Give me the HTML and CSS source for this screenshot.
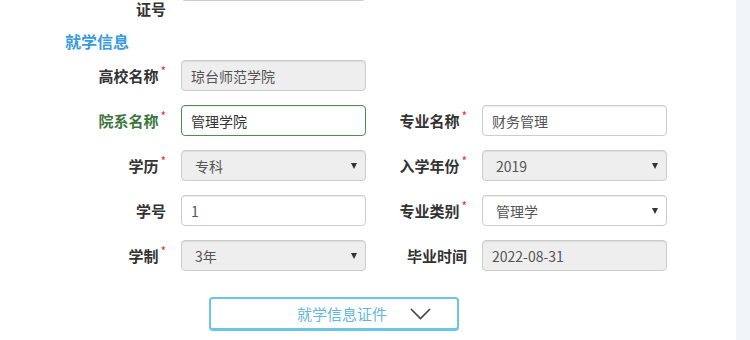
FILE: index.html
```html
<!DOCTYPE html>
<html lang="zh-CN">
<head>
    <meta charset="UTF-8">
    <title>就学信息</title>
    <link rel="stylesheet" href="styles.css">
</head>
<body>
    <div class="page">
        <div class="main">
            <div class="form-grid top-row">
                <label class="label tail">证号</label>
                <input class="field disabled" type="text" value="" disabled>
            </div>

            <h3 class="section-title">就学信息</h3>

            <div class="form-grid">
                <label class="label req">高校名称</label>
                <input class="field disabled" type="text" value="琼台师范学院" disabled>
                <span></span>
                <span></span>

                <label class="label req ok">院系名称</label>
                <input class="field ok" type="text" value="管理学院">
                <label class="label req">专业名称</label>
                <input class="field" type="text" value="财务管理">

                <label class="label req">学历</label>
                <div class="select disabled"><span>专科</span><i class="caret"></i></div>
                <label class="label req">入学年份</label>
                <div class="select disabled"><span>2019</span><i class="caret"></i></div>

                <label class="label">学号</label>
                <input class="field" type="text" value="1">
                <label class="label req">专业类别</label>
                <div class="select"><span>管理学</span><i class="caret"></i></div>

                <label class="label req">学制</label>
                <div class="select disabled"><span>3年</span><i class="caret"></i></div>
                <label class="label">毕业时间</label>
                <input class="field disabled" type="text" value="2022-08-31" disabled>
            </div>

            <button class="toggle-btn">
                <span>就学信息证件</span>
                <svg width="21" height="12" viewBox="0 0 21 12"><polyline points="1,1 10.5,10.5 20,1" fill="none" stroke="#444" stroke-width="1.6"/></svg>
            </button>
        </div>
        <div class="side"></div>
    </div>
</body>
</html>
```

FILE: styles.css
```css
html, body {
    margin: 0;
    padding: 0;
    height: 100%;
    overflow: hidden;
    background: #fff;
    font-family: "Noto Sans CJK SC", "Liberation Sans", sans-serif;
    color: #333;
}
.page {
    display: flex;
    height: 100%;
}
.main {
    flex: 1;
    background: #fff;
}
.side {
    width: 14px;
    background: #f0f5f9;
}
.form-grid {
    display: grid;
    grid-template-columns: 166px 185px 86px 185px;
    grid-auto-rows: 31px;
    column-gap: 15px;
    row-gap: 14px;
    align-items: center;
}
.top-row {
    margin-top: -30px;
    grid-auto-rows: auto;
    align-items: start;
}
.top-row .field {
    height: 31px;
}
.label {
    text-align: right;
    font-size: 15px;
    font-weight: bold;
    color: #333;
    white-space: nowrap;
    line-height: 20px;
}
.label.tail {
    line-height: 16px;
    margin-top: 31px;
    padding-bottom: 1px;
}
.label.req::after {
    content: "*";
    color: #e5322d;
    font-size: 12px;
    font-weight: normal;
    vertical-align: top;
    line-height: 10px;
    margin-left: 2px;
}
.label.ok {
    color: #3c763d;
}
.section-title {
    margin: 12px 0 8px 65px;
    font-size: 16px;
    line-height: 22px;
    font-weight: bold;
    color: #3a9be0;
}
.field,
.select {
    box-sizing: border-box;
    height: 31px;
    width: 185px;
    border: 1px solid #ccc;
    border-radius: 4px;
    background: #fff;
    font-family: "Noto Sans CJK SC", "Liberation Sans", sans-serif;
    font-size: 14px;
    color: #555;
    box-shadow: inset 0 1px 1px rgba(0, 0, 0, 0.075);
}
.field {
    padding: 0 9px;
    outline: none;
}
.field.disabled,
.select.disabled {
    background: #eee;
}
.field.ok {
    border: 1.5px solid #4d8f4e;
    color: #333;
}
.select {
    display: flex;
    align-items: center;
    justify-content: space-between;
    padding: 0 8px 0 13px;
}
.caret {
    width: 0;
    height: 0;
    border-left: 3.5px solid transparent;
    border-right: 3.5px solid transparent;
    border-top: 6px solid #333;
}
.toggle-btn {
    display: flex;
    align-items: center;
    gap: 23px;
    box-sizing: border-box;
    width: 250px;
    height: 34px;
    margin: 26px 0 0 209px;
    padding: 0 0 0 86px;
    border: 2px solid #6ac5e6;
    border-bottom-width: 3px;
    border-radius: 4px;
    background: #fff;
    font-family: "Noto Sans CJK SC", "Liberation Sans", sans-serif;
    font-size: 15px;
    color: #5fb6de;
    cursor: pointer;
}
```
